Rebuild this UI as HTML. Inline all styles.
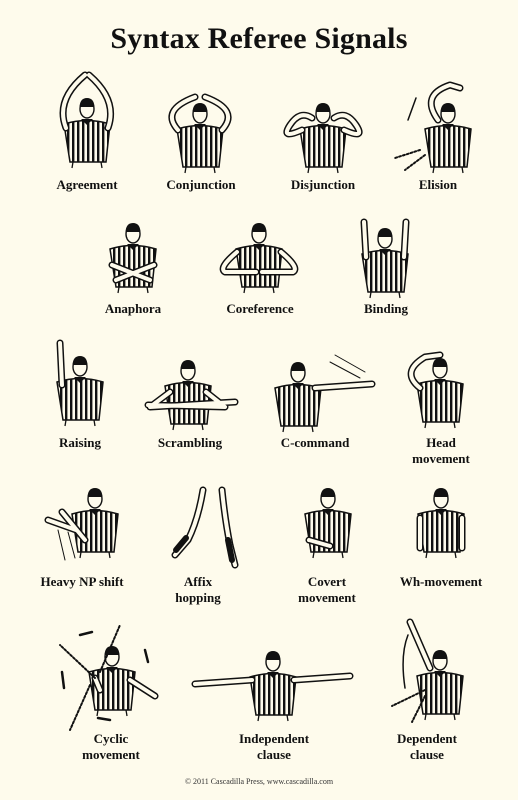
<!DOCTYPE html>
<html><head><meta charset="utf-8"><style>
html,body{margin:0;padding:0}
body{width:518px;height:800px;background:#fefbec;position:relative;overflow:hidden;font-family:"Liberation Serif",serif;color:#111}
h1{position:absolute;top:22px;left:0;width:518px;margin:0;text-align:center;font-size:30px;font-weight:bold;letter-spacing:0.2px}
.l{position:absolute;font-weight:bold;font-size:13px;line-height:16px;text-align:center;width:120px;margin-left:-60px}
.f{position:absolute;top:777px;left:0;width:518px;text-align:center;font-size:8px;color:#333}
svg{position:absolute;left:0;top:0}
</style></head><body>
<svg width="518" height="800">
<defs>
<pattern id="st" width="5" height="10" patternUnits="userSpaceOnUse"><rect width="5" height="10" fill="#fefbec"/><rect width="2.4" height="10" fill="#111"/></pattern>
<g id="ref">
<path d="M-23,4 Q0,-3 23,4 L19,42 L-17,42 Z" fill="url(#st)" stroke="#111" stroke-width="1.5"/>
<path d="M-6,-1 L0,5 L6,-1 Z" fill="#111"/>
<ellipse cx="0" cy="-11" rx="7" ry="9" fill="#fefbec" stroke="#111" stroke-width="1.4"/>
<path d="M-7.5,-13 Q-7,-22 0,-22 Q7,-22 7.5,-13 Z" fill="#111"/>
<path d="M-14,42 L-15,48 M14,42 L15,48" stroke="#111" stroke-width="1.3"/>
</g>
<g id="arms">
<path d="M66,128 Q55,100 85,75 M108,128 Q118,100 89,75"/>
<path d="M178,130 Q160,110 195,97 M222,130 Q240,110 205,97"/>
<path d="M302,130 Q280,140 290,125 Q300,110 312,118 M344,130 Q366,140 356,125 Q346,110 334,118"/>
<path d="M438,120 Q420,95 450,85 L460,88"/>
<path d="M112,265 L150,280 M154,265 L116,280"/>
<path d="M237,252 Q218,268 225,272 L256,272 M281,252 Q300,268 293,272 L262,272"/>
<path d="M366,257 L364,222 M404,257 L406,222"/>
<path d="M62,385 L60,343"/>
<path d="M170,392 L150,407 L235,402 M206,392 L225,407 L148,405"/>
<path d="M315,388 L372,384"/>
<path d="M420,388 Q400,372 425,357 L440,355"/>
<path d="M76,530 L48,520 M85,540 L62,512"/>
<path d="M203,490 Q198,520 188,540 L175,555 M222,490 Q225,520 230,545 L235,565"/>
<path d="M309,540 L330,546"/>
<path d="M420,518 L420,548 M462,518 L462,548"/>
<path d="M130,680 L155,696 M95,678 L100,690"/>
<path d="M252,680 L195,684 M294,680 L350,676"/>
<path d="M430,668 L410,622"/>
</g>
</defs>
<use href="#ref" x="87" y="120"/>
<use href="#ref" x="200" y="125"/>
<use href="#ref" x="323" y="125"/>
<use href="#ref" x="448" y="125"/>
<use href="#ref" x="133" y="245"/>
<use href="#ref" x="259" y="245"/>
<use href="#ref" x="385" y="250"/>
<use href="#ref" x="80" y="378"/>
<use href="#ref" x="188" y="382"/>
<use href="#ref" x="298" y="384"/>
<use href="#ref" x="440" y="380"/>
<use href="#ref" x="95" y="510"/>
<use href="#ref" x="328" y="510"/>
<use href="#ref" x="441" y="510"/>
<use href="#ref" x="112" y="668"/>
<use href="#ref" x="273" y="673"/>
<use href="#ref" x="440" y="672"/>
<use href="#arms" fill="none" stroke="#111" stroke-width="7" stroke-linecap="round" stroke-linejoin="round"/>
<use href="#arms" fill="none" stroke="#fefbec" stroke-width="4" stroke-linecap="round" stroke-linejoin="round"/>
<g fill="none" stroke="#111" stroke-linecap="round">
<path d="M420,150 L395,158 M425,155 L405,170" stroke-dasharray="2 2" stroke-width="2"/>
<path d="M408,120 L416,98" stroke-width="1.5"/>
<path d="M330,362 L360,378 M335,355 L365,372" stroke-width="1"/>
<path d="M58,530 L65,560 M68,532 L75,558" stroke-width="1"/>
<path d="M186,538 L176,550 M228,540 L232,560" stroke-width="6"/>
<path d="M95,678 L60,645 M90,685 L70,730 M100,672 L120,625" stroke-dasharray="2 2" stroke-width="2"/>
<path d="M80,635 L92,632 M145,650 L148,662 M62,672 L64,688 M98,718 L110,720" stroke-width="2.5"/>
<path d="M425,690 L392,706 M425,696 L412,722" stroke-dasharray="2 2" stroke-width="2"/>
<path d="M408,635 Q400,655 405,688" stroke-width="1.5"/>
</g>
</svg>
<h1>Syntax Referee Signals</h1>
<div class="l" style="left:87px;top:177px">Agreement</div>
<div class="l" style="left:201px;top:177px">Conjunction</div>
<div class="l" style="left:323px;top:177px">Disjunction</div>
<div class="l" style="left:438px;top:177px">Elision</div>
<div class="l" style="left:133px;top:301px">Anaphora</div>
<div class="l" style="left:260px;top:301px">Coreference</div>
<div class="l" style="left:386px;top:301px">Binding</div>
<div class="l" style="left:80px;top:435px">Raising</div>
<div class="l" style="left:190px;top:435px">Scrambling</div>
<div class="l" style="left:315px;top:435px">C-command</div>
<div class="l" style="left:441px;top:435px">Head<br>movement</div>
<div class="l" style="left:82px;top:574px">Heavy NP shift</div>
<div class="l" style="left:198px;top:574px">Affix<br>hopping</div>
<div class="l" style="left:327px;top:574px">Covert<br>movement</div>
<div class="l" style="left:441px;top:574px">Wh-movement</div>
<div class="l" style="left:111px;top:731px">Cyclic<br>movement</div>
<div class="l" style="left:274px;top:731px">Independent<br>clause</div>
<div class="l" style="left:427px;top:731px">Dependent<br>clause</div>
<div class="f">© 2011 Cascadilla Press, www.cascadilla.com</div>
</body></html>
